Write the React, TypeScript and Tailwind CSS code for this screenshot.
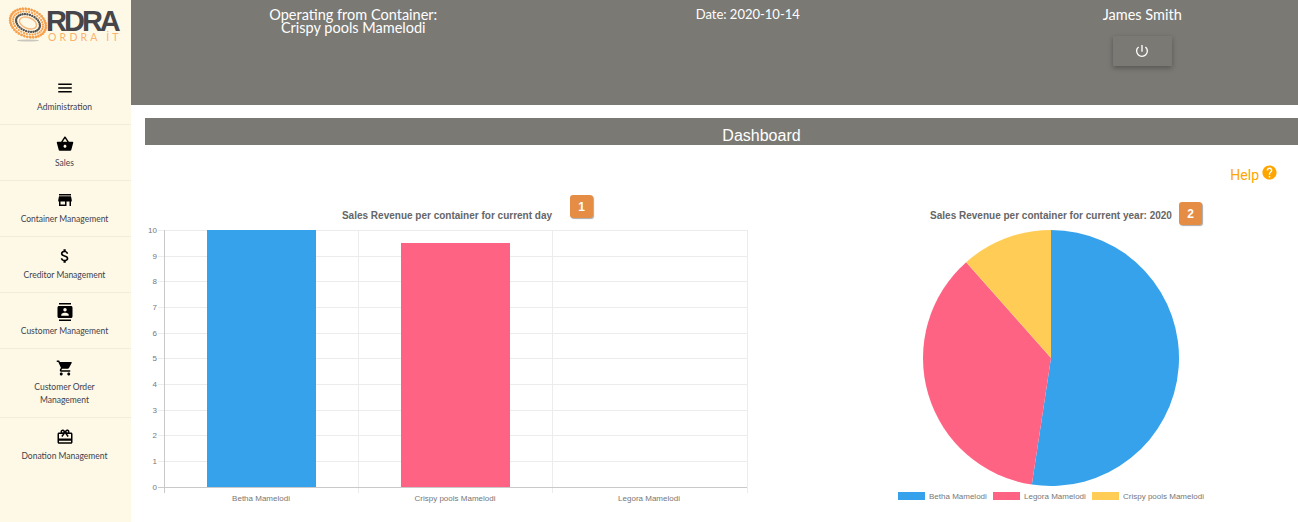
import {
  MdAttachMoney,
  MdCardGiftcard,
  MdContacts,
  MdHelp,
  MdMenu,
  MdPowerSettingsNew,
  MdShoppingBasket,
  MdShoppingCart,
  MdStore,
} from "react-icons/md";

const menuItems = [
  { label: "Administration", icon: MdMenu },
  { label: "Sales", icon: MdShoppingBasket },
  { label: "Container Management", icon: MdStore },
  { label: "Creditor Management", icon: MdAttachMoney },
  { label: "Customer Management", icon: MdContacts },
  { label: "Customer Order Management", icon: MdShoppingCart },
  { label: "Donation Management", icon: MdCardGiftcard },
];

const ringDots = (count: number, rx: number, ry: number) =>
  Array.from({ length: count }, (_, i) => {
    const a = (i / count) * Math.PI * 2;
    return { x: Math.cos(a) * rx, y: Math.sin(a) * ry };
  });

const Logo = () => (
  <div className="relative h-[69px] w-full">
    <svg className="absolute left-[8px] top-[4px]" width="40" height="40" viewBox="-20 -19 40 40">
      <ellipse cx="0" cy="17.5" rx="11" ry="1" fill="#c9c7bd" />
      <g transform="rotate(22)">
        {ringDots(38, 18.5, 13.5).map((d, i) => (
          <circle key={i} cx={d.x} cy={d.y} r="1.4" fill="#f6a04d" />
        ))}
        {ringDots(32, 15.5, 10.8).map((d, i) => (
          <circle key={i} cx={d.x} cy={d.y} r="1.1" fill="#f6a04d" />
        ))}
        {ringDots(30, 12.4, 8.2).map((d, i) => (
          <circle key={i} cx={d.x} cy={d.y} r="1.2" fill="#55534f" />
        ))}
        <ellipse cx="0" cy="0" rx="9" ry="5.4" fill="none" stroke="#f6b77d" strokeWidth="1.4" />
      </g>
    </svg>
    <div className="absolute left-[46px] top-[11px] font-['Liberation_Sans',sans-serif] text-[29px] leading-[21px] font-bold tracking-[-3px] text-[#45454a]">
      RDRA
    </div>
    <div className="absolute left-[48px] top-[33px] font-['Lato',sans-serif] text-[10.5px] leading-[9px] tracking-[3.2px] whitespace-nowrap text-[#f9b36e]">
      ORDRA İT
    </div>
  </div>
);

const Sidebar = () => (
  <aside className="flex h-[522px] w-[131px] shrink-0 flex-col bg-[#fef9e7]">
    <Logo />
    {menuItems.map((item, i) => {
      const Icon = item.icon;
      return (
        <div
          key={item.label}
          className={`flex flex-col items-center pt-[10px] pr-[13px] pb-[10px] pl-[11px] text-center ${
            i < menuItems.length - 1 ? "border-b border-[#f1ecdc]" : ""
          }`}
        >
          <Icon className="h-[18px] w-[18px] text-black" />
          <span className="mt-[4px] font-['Lato',sans-serif] text-[8.5px] leading-[13px] text-[#3f3f4d]">
            {item.label}
          </span>
        </div>
      );
    })}
  </aside>
);

const Header = () => (
  <header className="grid h-[105px] grid-cols-[repeat(3,394.5px)] bg-[#7b7974] pl-[25px] font-['Lato',sans-serif] text-[14.5px] leading-[13px] text-white">
    <div className="pt-[8px] text-center">
      Operating from Container:
      <br />
      Crispy pools Mamelodi
    </div>
    <div className="pt-[8px] text-center text-[13px]">Date: 2020-10-14</div>
    <div className="flex flex-col items-center pt-[8px]">
      James Smith
      <button className="mt-[15px] flex h-[30px] w-[59px] items-center justify-center bg-[#7b7974] shadow-[0_2px_5px_rgba(0,0,0,0.3)]">
        <MdPowerSettingsNew className="h-[16px] w-[16px] text-white" />
      </button>
    </div>
  </header>
);

const barGridY = [230, 256, 281, 307, 333, 358, 384, 410, 435, 461];
const barTicks = ["10", "9", "8", "7", "6", "5", "4", "3", "2", "1", "0"];
const tickY = [230, 256, 281, 307, 333, 358, 384, 410, 435, 461, 487];
const barLabels = [
  { x: 261, text: "Betha Mamelodi" },
  { x: 455, text: "Crispy pools Mamelodi" },
  { x: 649, text: "Legora Mamelodi" },
];

const Badge = ({ className, children }: { className: string; children: React.ReactNode }) => (
  <div
    className={`absolute flex h-[23px] w-[23px] items-center justify-center rounded-[3px] bg-[#e68d45] font-['Liberation_Sans',sans-serif] text-[12px] font-bold text-white shadow-[1px_1px_1px_#aaa] ${className}`}
  >
    {children}
  </div>
);

const BarChart = () => (
  <div className="relative h-[312px] w-[620px]">
    <svg width="620" height="312" viewBox="145 205 620 312" className="block font-['Liberation_Sans',sans-serif]">
      <text x="447" y="219" textAnchor="middle" fontSize="10" fontWeight="700" fill="#666">
        Sales Revenue per container for current day
      </text>
      {barGridY.map((y) => (
        <line key={y} x1="158" x2="747" y1={y + 0.5} y2={y + 0.5} stroke="#ececec" />
      ))}
      {[358, 552, 747].map((x) => (
        <line key={x} x1={x + 0.5} x2={x + 0.5} y1="230" y2="493" stroke="#ececec" />
      ))}
      <line x1="164.5" x2="164.5" y1="230" y2="493" stroke="#c9c9c9" />
      <line x1="158" x2="747" y1="487.5" y2="487.5" stroke="#c9c9c9" />
      <rect x="207" y="230" width="109" height="257" fill="#36a2eb" />
      <rect x="401" y="243" width="109" height="244" fill="#ff6384" />
      {barTicks.map((t, i) => (
        <text key={t} x="157" y={tickY[i] + 3} textAnchor="end" fontSize="8" fill="#777">
          {t}
        </text>
      ))}
      {barLabels.map((l) => (
        <text key={l.text} x={l.x} y="501" textAnchor="middle" fontSize="8" fill="#777">
          {l.text}
        </text>
      ))}
    </svg>
    <Badge className="left-[425px] top-[-10px]">1</Badge>
  </div>
);

const piePoint = (deg: number) => {
  const a = (deg * Math.PI) / 180;
  return `${1051 + Math.sin(a) * 128} ${358 - Math.cos(a) * 128}`;
};

const slicePath = (from: number, to: number) =>
  `M1051 358 L${piePoint(from)} A128 128 0 ${to - from > 180 ? 1 : 0} 1 ${piePoint(to)} Z`;

const legend = [
  { x: 898, color: "#36a2eb", text: "Betha Mamelodi" },
  { x: 993, color: "#ff6384", text: "Legora Mamelodi" },
  { x: 1092, color: "#ffcd56", text: "Crispy pools Mamelodi" },
];

const PieChart = () => (
  <div className="relative h-[312px] w-[340px]">
    <svg width="340" height="312" viewBox="880 205 340 312" className="block font-['Liberation_Sans',sans-serif]">
      <text x="1051" y="219" textAnchor="middle" fontSize="10" fontWeight="700" fill="#666">
        Sales Revenue per container for current year: 2020
      </text>
      <path d={slicePath(0, 188.6)} fill="#36a2eb" />
      <path d={slicePath(188.6, 318.5)} fill="#ff6384" />
      <path d={slicePath(318.5, 360)} fill="#ffcd56" />
      {legend.map((l) => (
        <g key={l.text}>
          <rect x={l.x} y="492" width="27" height="8" fill={l.color} />
          <text x={l.x + 31} y="499" fontSize="8" fill="#777">
            {l.text}
          </text>
        </g>
      ))}
    </svg>
    <Badge className="left-[299px] top-[-3px]">2</Badge>
  </div>
);

export default function App() {
  return (
    <div className="flex h-[522px] w-[1298px] overflow-hidden bg-white">
      <Sidebar />
      <main className="flex min-w-0 flex-1 flex-col">
        <Header />
        <div className="mt-[13px] ml-[14px] flex h-[27px] items-end justify-center bg-[#7b7974] pl-[80px] font-['Liberation_Sans',sans-serif] text-[16px] leading-[18px] text-white">
          Dashboard
        </div>
        <div className="mt-[20px] flex items-center justify-end gap-[2px] pr-[20px] font-['Roboto',sans-serif] text-[14px] text-[#ffa500]">
          Help
          <MdHelp className="h-[17px] w-[17px] -translate-y-[3px]" />
        </div>
        <div className="mt-[19px] flex pl-[14px]">
          <BarChart />
          <div className="ml-[115px]">
            <PieChart />
          </div>
        </div>
      </main>
    </div>
  );
}
